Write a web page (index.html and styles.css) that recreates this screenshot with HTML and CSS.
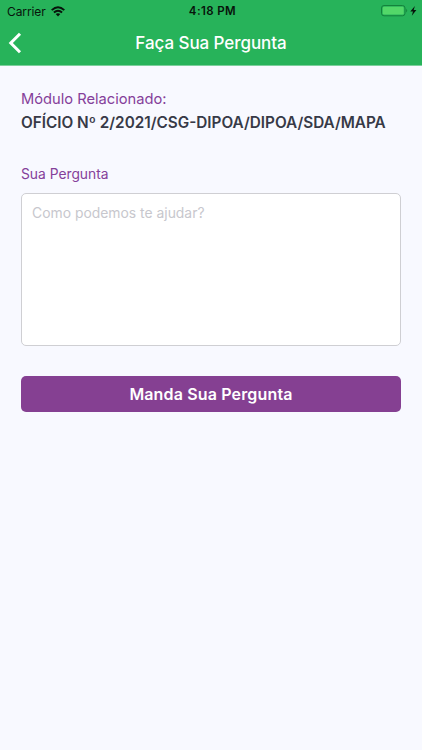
FILE: index.html
```html
<!DOCTYPE html>
<html lang="pt-BR">
<head>
<meta charset="utf-8">
<title>Faça Sua Pergunta</title>
<link rel="stylesheet" href="styles.css">
</head>
<body>
<header class="header">
  <div class="status">
    <div class="carrier"><span class="carrier-name">Carrier</span>
      <svg class="wifi" viewBox="0 0 14 11" width="14" height="11"><g fill="none" stroke="#07140b" stroke-width="1.9"><path d="M.7 4.1Q7-1.7 13.3 4.1"/><path d="M2.9 6.5Q7 2.9 11.1 6.5"/></g><path d="M4.7 8.1Q7 6.2 9.3 8.1L7 10.5z" fill="#07140b"/></svg>
    </div>
    <span class="time">4:18 PM</span>
    <svg class="battery" viewBox="0 0 37 12" width="37" height="12"><rect x=".5" y=".5" width="23.5" height="10.3" rx="2.5" fill="none" stroke="#14823c"/><rect x="1.8" y="1.8" width="20.9" height="7.7" rx="1.3" fill="#53d769"/><path d="M25.2 3.8q2 1.8 0 3.7z" fill="#14823c"/><path d="M33.9 1L29.3 6.4h2.7L30.8 10.8l4.6-5.7h-2.7z" fill="#07140b"/></svg>
  </div>
  <div class="nav">
    <svg class="back" viewBox="0 0 14 22" width="14" height="22"><path d="M12 1.7L2.8 11 12 20.3" fill="none" stroke="#fff" stroke-width="3"/></svg>
    <h1 class="title">Faça Sua Pergunta</h1>
  </div>
</header>
<main class="content">
  <div class="label"><span class="label-module">Módulo Relacionado:</span></div>
  <div class="module"><span class="module-name">OFÍCIO Nº 2/2021/CSG-DIPOA/DIPOA/SDA/MAPA</span></div>
  <label class="label question" for="q"><span class="label-question">Sua Pergunta</span></label>
  <textarea id="q" class="field" placeholder="Como podemos te ajudar?"></textarea>
  <button class="submit">Manda Sua Pergunta</button>
</main>
</body>
</html>
```
FILE: styles.css
```css
* { box-sizing: border-box; }
body { margin: 0; height: 750px; overflow: hidden; background: #f8f9ff; font-family: Inter, sans-serif; }
.header { height: 66px; background: #27b35a; border-bottom: 1px solid #7ccf9c; }
.status { height: 22px; display: grid; grid-template-columns: 1fr auto 1fr; align-items: center; padding: 0 4px 0 7px; color: #07140b; font-size: 12px; }
.carrier { display: flex; align-items: center; gap: 5px; }
.carrier-name { letter-spacing: -0.1px; }
.time { font-weight: 600; font-size: 11.5px; letter-spacing: 0.4px; }
.battery { justify-self: end; }
.nav { height: 42px; display: grid; grid-template-columns: 40px 1fr 40px; align-items: center; }
.back { margin-left: 8px; }
.title { margin: 0; text-align: center; color: #fff; font-size: 17px; font-weight: 500; letter-spacing: -0.06px; }
.content { padding: 22px 21px 0; display: flex; flex-direction: column; }
.label { height: 22px; line-height: 22px; font-size: 14.7px; color: #85409a; }
.module { height: 26px; line-height: 26px; font-size: 15.3px; font-weight: 600; color: #373a47; white-space: nowrap; }
.question { margin-top: 27px; font-size: 13.8px; }
.field { margin: 8px 0 0; height: 153px; resize: none; padding: 10px; border: 1px solid #cfcfd3; border-radius: 5px; background: #fff; font: 13.9px/18px Inter, sans-serif; }
.field::placeholder { color: #c7c7cd; }
.submit { margin-top: 30px; height: 36px; padding: 0; border: 0; border-radius: 5px; background: #854092; color: #fff; font: 600 16px Inter, sans-serif; letter-spacing: 0.15px; }
```
